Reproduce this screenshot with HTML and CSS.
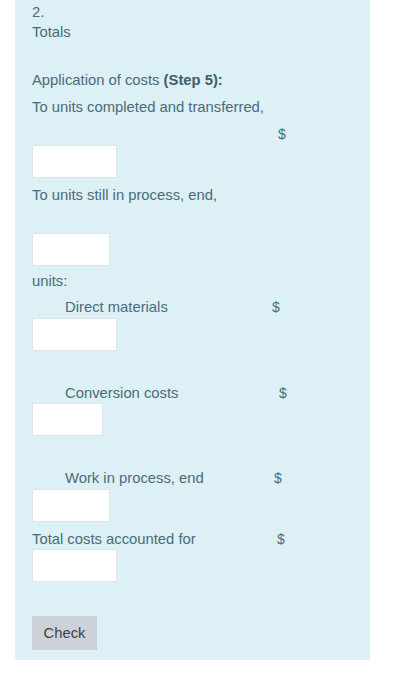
FILE: index.html
```html
<!DOCTYPE html>
<html>
<head>
<meta charset="utf-8">
<link rel="stylesheet" href="styles.css">
</head>
<body>
<div class="panel">
  <div class="t first">2.</div>
  <div class="t">Totals</div>
  <div class="t gap28">Application of costs <b>(Step 5):</b></div>
  <div class="t gap7">To units completed and transferred,</div>
  <div class="line c246 gap7"><span></span><span class="dollar">$</span></div>
  <div class="box w85 gap1"></div>
  <div class="t gap7">To units still in process, end,</div>
  <div class="box w78 gap28"></div>
  <div class="t gap5">units:</div>
  <div class="line c240 gap6"><span class="ind">Direct materials</span><span class="dollar">$</span></div>
  <div class="box w85 gap1"></div>
  <div class="line c247 gap32"><span class="ind">Conversion costs</span><span class="dollar">$</span></div>
  <div class="box w71"></div>
  <div class="line c242 gap32"><span class="ind">Work in process, end</span><span class="dollar">$</span></div>
  <div class="box w78 gap1"></div>
  <div class="line c245 gap7"><span>Total costs accounted for</span><span class="dollar">$</span></div>
  <div class="box w85"></div>
  <button class="check">Check</button>
</div>
</body>
</html>
```
FILE: styles.css
```css
html, body {
  margin: 0;
  padding: 0;
  background: #ffffff;
}
body {
  font-family: "Liberation Sans", Arial, sans-serif;
  font-size: 14.8px;
  line-height: 20px;
  color: #4a6c78;
}
.panel {
  margin-left: 15px;
  width: 338px;
  padding: 2px 0 10px 17px;
  background: #dcf0f6;
  display: flex;
  flex-direction: column;
  align-items: flex-start;
}
.t { height: 20px; }
b { color: #3e5e69; }
.gap1 { margin-top: 1px; }
.gap5 { margin-top: 5px; }
.gap6 { margin-top: 6px; }
.gap7 { margin-top: 7px; }
.gap28 { margin-top: 28px; }
.gap32 { margin-top: 32px; }
.line {
  display: grid;
  height: 20px;
}
.c240 { grid-template-columns: 240px auto; }
.c242 { grid-template-columns: 242px auto; }
.c245 { grid-template-columns: 245px auto; }
.c246 { grid-template-columns: 246px auto; }
.c247 { grid-template-columns: 247px auto; }
.ind { padding-left: 33px; }
.dollar { font-size: 14px; }
.box {
  height: 31px;
  background: #ffffff;
  border: 1px solid #dfe4e7;
  box-sizing: content-box;
}
.w71 { width: 69px; }
.w78 { width: 76px; }
.w85 { width: 83px; }
.check {
  margin-top: 34px;
  width: 65px;
  height: 34px;
  border: none;
  background: #cdd2d9;
  color: #3a4148;
  font-family: "Liberation Sans", Arial, sans-serif;
  font-size: 14.8px;
  padding: 0;
}
```
